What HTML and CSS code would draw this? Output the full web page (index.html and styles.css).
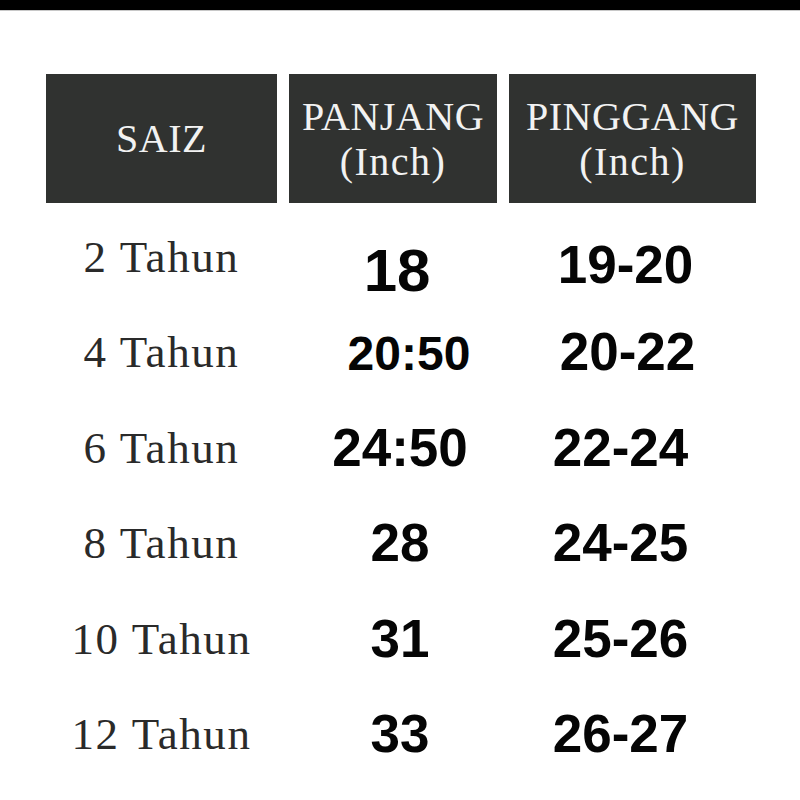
FILE: index.html
```html
<!DOCTYPE html>
<html>
<head>
<meta charset="utf-8">
<link rel="stylesheet" href="styles.css">
</head>
<body>
<div class="topbar"></div>
<div class="chart">
  <div class="head"><span>SAIZ</span></div>
  <div class="head"><span>PANJANG</span><span class="unit">(Inch)</span></div>
  <div class="head"><span>PINGGANG</span><span class="unit">(Inch)</span></div>

  <div class="size">2 Tahun</div>
  <div class="num len first-big">18</div>
  <div class="num waist first">19-20</div>

  <div class="size">4 Tahun</div>
  <div class="num len small">20:50</div>
  <div class="num waist shift">20-22</div>

  <div class="size">6 Tahun</div>
  <div class="num len">24:50</div>
  <div class="num waist">22-24</div>

  <div class="size">8 Tahun</div>
  <div class="num len">28</div>
  <div class="num waist">24-25</div>

  <div class="size">10 Tahun</div>
  <div class="num len">31</div>
  <div class="num waist">25-26</div>

  <div class="size">12 Tahun</div>
  <div class="num len">33</div>
  <div class="num waist">26-27</div>
</div>
</body>
</html>
```
FILE: styles.css
```css
html, body {
  margin: 0;
  padding: 0;
  background: #ffffff;
}

.topbar {
  height: 10px;
  background: #000000;
  border-bottom: 1px solid #c8c8c8;
}

.chart {
  display: grid;
  grid-template-columns: 231px 208px 247px;
  grid-template-rows: 129px repeat(6, 95.4px);
  column-gap: 12px;
  margin: 63px 0 0 46px;
  width: 710px;
}

.head {
  background: #303230;
  color: #f2f2f2;
  font-family: "Liberation Serif", "Times New Roman", serif;
  font-size: 40px;
  line-height: 45px;
  letter-spacing: 0.5px;
  display: flex;
  flex-direction: column;
  align-items: center;
  justify-content: center;
  text-align: center;
}

.unit {
  letter-spacing: 1.5px;
}

.size {
  font-family: "Liberation Serif", "Times New Roman", serif;
  font-size: 45px;
  line-height: 1;
  letter-spacing: 1.6px;
  color: #2a2a2a;
  text-align: center;
  padding-top: 32px;
}

.num {
  font-family: "Liberation Sans", Arial, sans-serif;
  font-weight: bold;
  font-size: 53px;
  line-height: 1;
  color: #050505;
  text-align: center;
  padding-top: 27px;
}

.len {
  padding-left: 14px;
}

.waist {
  padding-right: 24px;
}

.first-big {
  font-size: 60px;
  padding-top: 38px;
  padding-left: 8px;
}

.first {
  padding-top: 35px;
  padding-right: 14px;
}

.small {
  font-size: 48px;
  padding-top: 32px;
  padding-left: 32px;
}

.shift {
  padding-right: 10px;
}
```
